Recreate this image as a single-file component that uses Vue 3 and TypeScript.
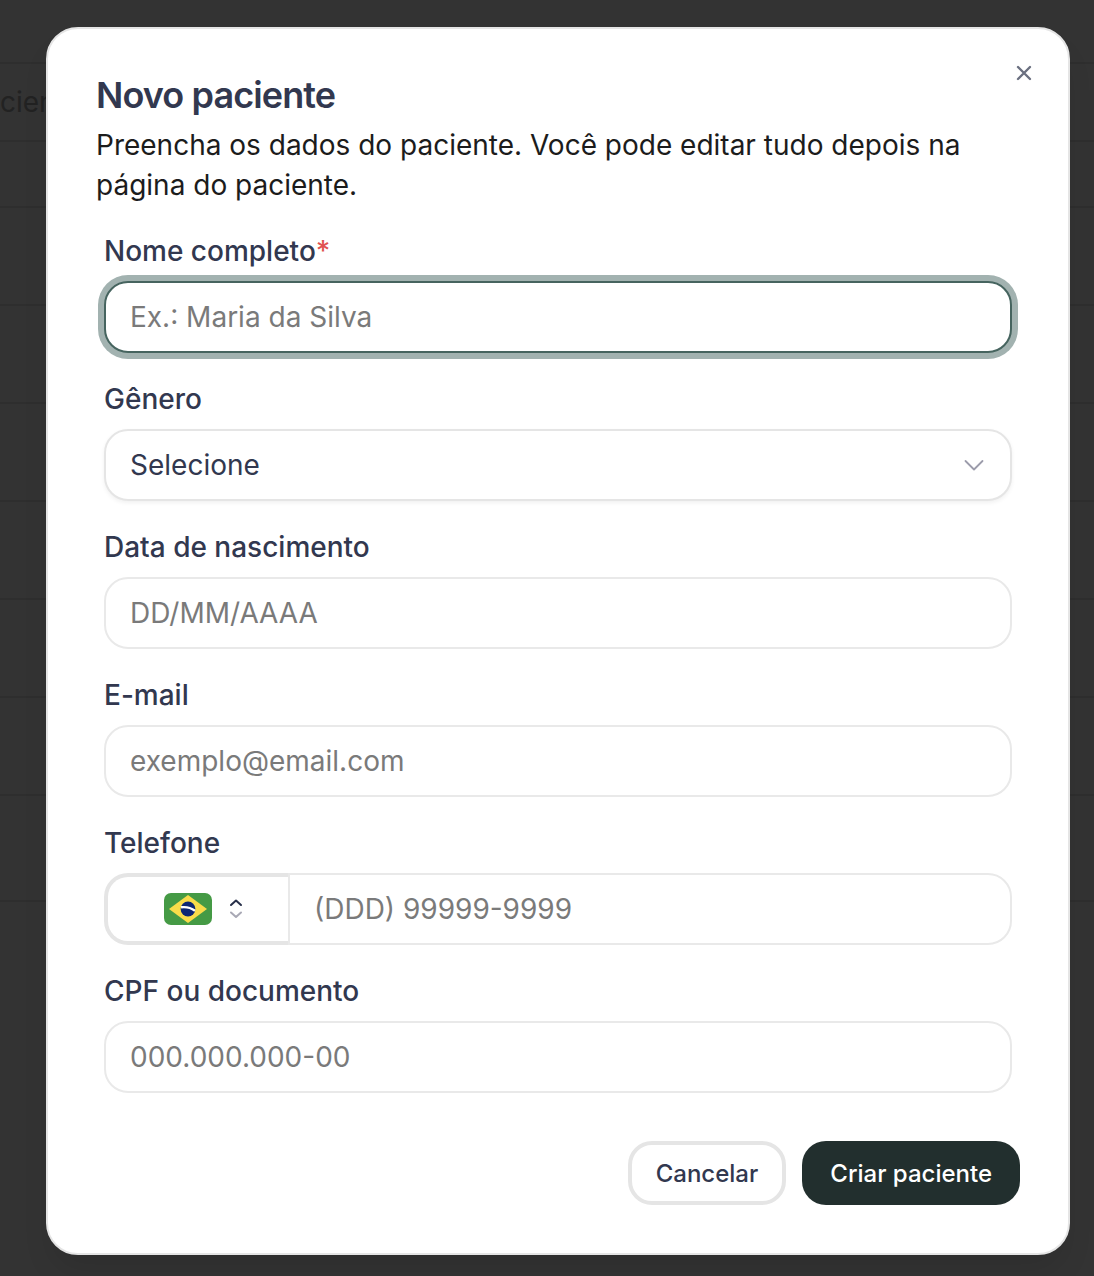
<script setup lang="ts">
import { ref } from 'vue'

interface Field {
  id: string
  label: string
  placeholder: string
  kind: 'text' | 'select' | 'phone'
  type?: string
  required?: boolean
  active?: boolean
}

const fields: Field[] = [
  { id: 'nome', label: 'Nome completo', placeholder: 'Ex.: Maria da Silva', kind: 'text', required: true, active: true },
  { id: 'genero', label: 'Gênero', placeholder: 'Selecione', kind: 'select' },
  { id: 'nascimento', label: 'Data de nascimento', placeholder: 'DD/MM/AAAA', kind: 'text' },
  { id: 'email', label: 'E-mail', placeholder: 'exemplo@email.com', kind: 'text', type: 'email' },
  { id: 'telefone', label: 'Telefone', placeholder: '(DDD) 99999-9999', kind: 'phone', type: 'tel' },
  { id: 'documento', label: 'CPF ou documento', placeholder: '000.000.000-00', kind: 'text' },
]

const values = ref<Record<string, string>>({
  nome: '', genero: '', nascimento: '', email: '', telefone: '', documento: '',
})

const rowSizes = ['bar', 'head', 'sub', 'item', 'item', 'item', 'item', 'item', 'item', 'foot']
</script>

<template>
  <div class="screen">
    <div class="backdrop" aria-hidden="true">
      <div v-for="(size, i) in rowSizes" :key="i" class="row" :class="size">
        <span v-if="size === 'head'">cien</span>
      </div>
    </div>

    <section class="modal" role="dialog" aria-modal="true" aria-labelledby="titulo">
      <button class="close" type="button" aria-label="Fechar">
        <svg viewBox="0 0 24 24" width="24" height="24" fill="none" stroke="currentColor" stroke-width="2.4" stroke-linecap="round">
          <path d="M6 6 18 18M18 6 6 18" />
        </svg>
      </button>

      <header>
        <h2 id="titulo">Novo paciente</h2>
        <p>Preencha os dados do paciente. Você pode editar tudo depois na página do paciente.</p>
      </header>

      <form @submit.prevent>
        <div class="fields">
          <div v-for="f in fields" :key="f.id" class="field">
            <label :for="f.id">{{ f.label }}<span v-if="f.required" class="star">*</span></label>

            <div v-if="f.kind === 'select'" class="select">
              <select :id="f.id" v-model="values[f.id]" class="control">
                <option value="">{{ f.placeholder }}</option>
              </select>
              <svg viewBox="0 0 20 12" width="20" height="12" fill="none" stroke="#9c9cab" stroke-width="1.8" stroke-linecap="round" stroke-linejoin="round">
                <path d="M1.5 2 10 10.5 18.5 2" />
              </svg>
            </div>

            <div v-else-if="f.kind === 'phone'" class="phone">
              <button class="country" type="button" aria-label="País">
                <svg viewBox="0 0 48 32" width="48" height="32">
                  <rect width="48" height="32" rx="7" fill="#459a45" />
                  <path d="M24 2 43 16 24 30 5 16Z" fill="#f9dc4a" />
                  <circle cx="24" cy="16" r="7.4" fill="#0c2674" />
                  <path d="M17 14.3C22 13.6 27 14.8 31 17.8" fill="none" stroke="#fff" stroke-width="2.4" />
                </svg>
                <svg viewBox="0 0 14 22" width="14" height="22" fill="none" stroke-width="2" stroke-linecap="round" stroke-linejoin="round">
                  <path d="M2 7 7 2.5 12 7" stroke="#28304a" />
                  <path d="M2 14.5 7 19 12 14.5" stroke="#a9a9b5" />
                </svg>
              </button>
              <input :id="f.id" v-model="values[f.id]" class="control" :type="f.type" :placeholder="f.placeholder" />
            </div>

            <input
              v-else
              :id="f.id"
              v-model="values[f.id]"
              class="control"
              :class="{ active: f.active }"
              :type="f.type ?? 'text'"
              :placeholder="f.placeholder"
              :required="f.required"
            />
          </div>
        </div>

        <footer>
          <button class="btn outline" type="button">Cancelar</button>
          <button class="btn solid" type="submit">Criar paciente</button>
        </footer>
      </form>
    </section>
  </div>
</template>

<style>
body {
  background: #333;
}
</style>

<style scoped>
* {
  box-sizing: border-box;
}

.screen {
  position: relative;
  display: flow-root;
  min-height: 100vh;
  background: #333;
  color: #32384f;
  font-family: Inter, "Liberation Sans", sans-serif;
  font-size: 28px;
  font-optical-sizing: none;
}

.backdrop {
  position: absolute;
  inset: 0;
  overflow: hidden;
}

.row {
  display: flex;
  align-items: center;
  border-bottom: 2px solid #2e2e2e;
  color: #222;
}
.bar { height: 64px; }
.head { height: 78px; }
.sub { height: 66px; }
.item { height: 98px; }
.foot { height: 106px; }

.modal {
  position: relative;
  margin: 27px 24px 21px 46px;
  padding: 48px;
  border: 2px solid #e5e5e5;
  border-radius: 32px;
  background: #fff;
  box-shadow: 0 20px 30px -6px rgba(0, 0, 0, 0.1);
}

.close {
  position: absolute;
  top: 32px;
  right: 32px;
  display: flex;
  padding: 0;
  border: 0;
  background: none;
  color: #6b7080;
}

h2 {
  margin: 0;
  font-size: 36px;
  font-weight: 600;
  line-height: 36px;
  letter-spacing: -0.025em;
}

p {
  margin: 12px 0 0;
  line-height: 40px;
  color: #1c1c1c;
}

.fields {
  display: flex;
  flex-direction: column;
  gap: 32px;
  padding: 32px 8px 0;
}

.field {
  display: flex;
  flex-direction: column;
  gap: 16px;
}

label {
  font-weight: 500;
  line-height: 28px;
}

.star {
  color: #e05252;
}

.control {
  width: 100%;
  min-width: 0;
  height: 72px;
  padding: 0 24px;
  border: 2px solid #e9e9e9;
  border-radius: 24px;
  outline: 0;
  background: #fff;
  color: #32384f;
  font: inherit;
}
.control::placeholder {
  color: #7a7a7a;
  opacity: 1;
}
.control.active {
  border-color: #46645f;
  box-shadow: 0 0 0 6px #a2b2b0;
}

.select {
  display: grid;
  align-items: center;
}
.select > * {
  grid-area: 1 / 1;
}
.select select {
  appearance: none;
  border-color: #e5e5e5;
  box-shadow: 0 2px 4px rgba(0, 0, 0, 0.06);
}
.select svg {
  justify-self: end;
  margin-right: 28px;
  pointer-events: none;
}

.phone {
  display: flex;
}
.country {
  display: flex;
  flex: 0 0 184px;
  align-items: center;
  justify-content: flex-end;
  gap: 17px;
  padding: 0 45px 0 0;
  border: 4px solid #e5e5e5;
  border-right: 0;
  border-radius: 24px 0 0 24px;
  background: #fff;
}
.phone .control {
  flex: 1;
  border-radius: 0 24px 24px 0;
}

footer {
  display: flex;
  justify-content: flex-end;
  gap: 16px;
  margin-top: 48px;
}

.btn {
  height: 64px;
  padding: 0 28px;
  border: 0;
  border-radius: 24px;
  font: inherit;
  font-size: 24px;
  font-weight: 500;
}
.outline {
  padding: 0 24px;
  border: 4px solid #e5e5e5;
  background: #fff;
  color: #32384f;
}
.solid {
  background: #222f2e;
  color: #fff;
}
</style>
